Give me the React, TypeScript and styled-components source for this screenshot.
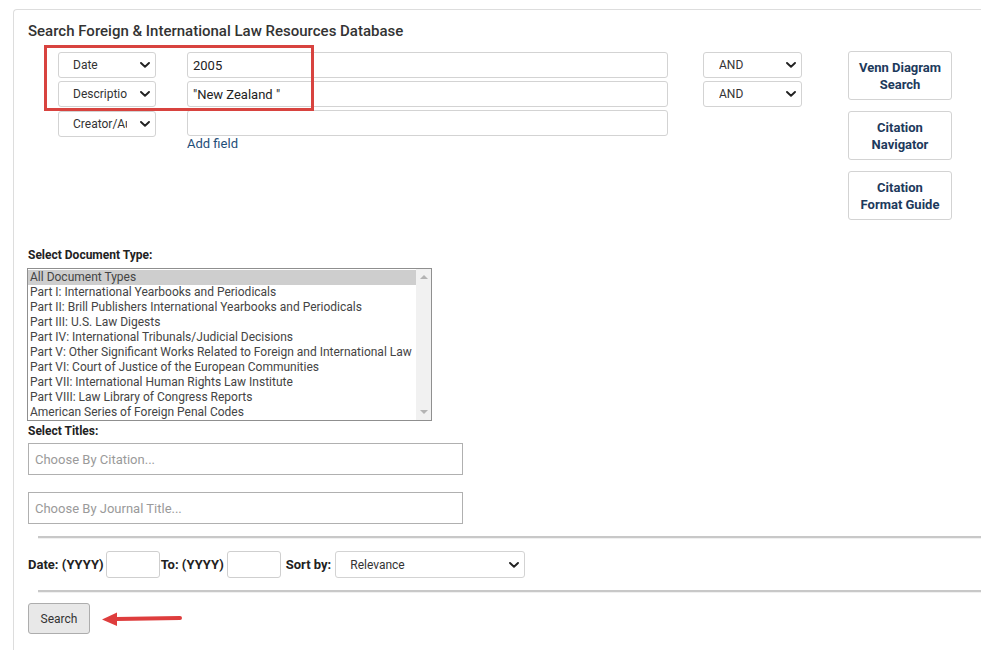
import React from "react";
import styled, { createGlobalStyle } from "styled-components";

const GlobalStyle = createGlobalStyle`
  html, body {
    margin: 0;
    padding: 0;
    background: #fff;
    overflow: hidden;
  }
  body {
    font-family: Roboto, "Liberation Sans", Arial, sans-serif;
    color: #333;
  }
`;

const fields = [
  { name: "Date", value: "2005", bool: "AND" },
  { name: "Description", value: "\"New Zealand \"", bool: "AND" },
  { name: "Creator/Author", value: "", bool: null },
];

const docTypes = [
  "All Document Types",
  "Part I: International Yearbooks and Periodicals",
  "Part II: Brill Publishers International Yearbooks and Periodicals",
  "Part III: U.S. Law Digests",
  "Part IV: International Tribunals/Judicial Decisions",
  "Part V: Other Significant Works Related to Foreign and International Law",
  "Part VI: Court of Justice of the European Communities",
  "Part VII: International Human Rights Law Institute",
  "Part VIII: Law Library of Congress Reports",
  "American Series of Foreign Penal Codes",
];

const Chevron = () => (
  <svg width="10" height="6" viewBox="0 0 10 6">
    <path d="M1 1 L5 4.8 L9 1" fill="none" stroke="#222" strokeWidth="1.9" strokeLinecap="round" strokeLinejoin="round" />
  </svg>
);

export default function App() {
  return (
    <>
      <GlobalStyle />
      <Panel>
        <Title>Search Foreign &amp; International Law Resources Database</Title>
        <QueryArea>
          <FieldGrid>
            {fields.map((f) => (
              <React.Fragment key={f.name}>
                <FieldSelect>
                  <SelectText $width={54}>{f.name}</SelectText>
                  <Chevron />
                </FieldSelect>
                <TermInput>{f.value}</TermInput>
                {f.bool ? (
                  <BoolSelect>
                    <SelectText $width={50}>{f.bool}</SelectText>
                    <Chevron />
                  </BoolSelect>
                ) : (
                  <span />
                )}
              </React.Fragment>
            ))}
            <span />
            <AddField>Add field</AddField>
            <Highlight />
          </FieldGrid>
          <ToolColumn>
            <ToolButton>Venn Diagram<br />Search</ToolButton>
            <ToolButton>Citation<br />Navigator</ToolButton>
            <ToolButton>Citation<br />Format Guide</ToolButton>
          </ToolColumn>
        </QueryArea>

        <Label>Select Document Type:</Label>
        <ListBox>
          <Options>
            {docTypes.map((d, i) => (
              <Option key={d} $selected={i === 0}>{d}</Option>
            ))}
          </Options>
          <ScrollTrack>
            <ScrollArrow $up />
            <ScrollArrow />
          </ScrollTrack>
        </ListBox>

        <TitlesLabel>Select Titles:</TitlesLabel>
        <TitleInputs>
          <TitleInput>Choose By Citation...</TitleInput>
          <TitleInput>Choose By Journal Title...</TitleInput>
        </TitleInputs>

        <Rule />
        <FilterRow>
          <FilterLabel $gap={2}>Date: (YYYY)</FilterLabel>
          <YearInput $gap={1} />
          <FilterLabel $gap={3}>To: (YYYY)</FilterLabel>
          <YearInput $gap={5} />
          <FilterLabel $gap={4}>Sort by:</FilterLabel>
          <SortSelect>
            <span>Relevance</span>
            <Chevron />
          </SortSelect>
        </FilterRow>
        <Rule />

        <SubmitRow>
          <SearchButton>Search</SearchButton>
          <svg width="84" height="16" viewBox="0 0 84 16">
            <path d="M16 8 L80 7" stroke="#de3d3d" strokeWidth="4" strokeLinecap="round" />
            <path d="M2 8.5 L17 1.5 L17 15 Z" fill="#de3d3d" />
          </svg>
        </SubmitRow>
      </Panel>
    </>
  );
}

const Panel = styled.div`
  margin: 9px 0 0 13px;
  height: 660px;
  border: 1px solid #ddd;
  border-right: none;
  border-bottom: none;
  border-top-left-radius: 4px;
  padding: 11px 0 0 14px;
`;

const Title = styled.h2`
  margin: 0 0 10px;
  font-size: 15px;
  line-height: 20px;
  font-weight: 500;
  color: #333;
`;

const QueryArea = styled.div`
  display: flex;
  align-items: flex-start;
  margin-left: 30px;
`;

const FieldGrid = styled.div`
  position: relative;
  display: grid;
  grid-template-columns: 98px 481px 103px;
  grid-template-rows: 26px 26px 26px auto;
  column-gap: 31px;
  row-gap: 3px;
  margin-top: 1px;
  & > :nth-child(7) {
    margin-top: 1px;
  }
`;

const Control = styled.div`
  box-sizing: border-box;
  display: flex;
  align-items: center;
  height: 26px;
  border: 1px solid #d3d3d3;
  border-radius: 3px;
  background: #fff;
  font-size: 12px;
  color: #333;
`;

const FieldSelect = styled(Control)`
  justify-content: space-between;
  padding: 0 5px 0 14px;
`;

const BoolSelect = styled(Control)`
  width: 99px;
  justify-self: end;
  justify-content: space-between;
  padding: 0 5px 0 15px;
`;

const SelectText = styled.span<{ $width: number }>`
  width: ${(p) => p.$width}px;
  overflow: hidden;
  white-space: nowrap;
`;

const TermInput = styled(Control)`
  padding: 0 5px;
  font-size: 13px;
  color: #222;
`;

const AddField = styled.a`
  grid-column: 2;
  font-size: 13px;
  line-height: 16px;
  margin-top: -3px;
  color: #1f4e79;
  text-decoration: none;
  cursor: pointer;
`;

const Highlight = styled.div`
  position: absolute;
  left: -14px;
  top: -7px;
  width: 270px;
  height: 66px;
  box-sizing: border-box;
  border: 3px solid #d8433f;
  pointer-events: none;
`;

const ToolColumn = styled.div`
  display: flex;
  flex-direction: column;
  gap: 11px;
  margin-left: 46px;
`;

const ToolButton = styled.button`
  box-sizing: border-box;
  width: 104px;
  height: 49px;
  border: 1px solid #d3d3d3;
  border-radius: 3px;
  background: #fff;
  font-family: Roboto, "Liberation Sans", Arial, sans-serif;
  font-size: 13px;
  font-weight: 700;
  line-height: 17px;
  color: #1d3a5c;
  padding: 0;
`;

const Label = styled.div`
  margin: 27px 0 4px;
  font-size: 12px;
  line-height: 17px;
  font-weight: 700;
  color: #222;
`;

const ListBox = styled.div`
  box-sizing: border-box;
  display: flex;
  width: 405px;
  height: 153px;
  margin-left: -1px;
  border: 1px solid #8f8f8f;
  background: #fff;
`;

const Options = styled.div`
  flex: 1;
  padding-top: 1px;
`;

const Option = styled.div<{ $selected?: boolean }>`
  height: 15px;
  line-height: 15px;
  padding-left: 2px;
  font-size: 12px;
  white-space: nowrap;
  color: #444;
  background: ${(p) => (p.$selected ? "#cecece" : "transparent")};
`;

const ScrollTrack = styled.div`
  width: 15px;
  display: flex;
  flex-direction: column;
  justify-content: space-between;
  align-items: center;
  padding: 6px 0;
  background: #f1f1f1;
`;

const ScrollArrow = styled.div<{ $up?: boolean }>`
  width: 0;
  height: 0;
  border-left: 4px solid transparent;
  border-right: 4px solid transparent;
  ${(p) => (p.$up ? "border-bottom: 4px solid #b4b4b4;" : "border-top: 4px solid #b4b4b4;")}
`;

const TitlesLabel = styled(Label)`
  margin: 2px 0 3px;
`;

const TitleInputs = styled.div`
  display: flex;
  flex-direction: column;
  gap: 17px;
  margin-bottom: 12px;
`;

const TitleInput = styled.div`
  box-sizing: border-box;
  width: 435px;
  height: 32px;
  padding: 0 6px;
  display: flex;
  align-items: center;
  border: 1px solid #b0b0b0;
  font-size: 13px;
  color: #9a9a9a;
`;

const Rule = styled.hr`
  margin: 0 0 0 10px;
  height: 0;
  border: none;
  border-top: 2px solid #c8c8c8;
  border-bottom: 1px solid #f0f0f0;
`;

const FilterRow = styled.div`
  display: flex;
  align-items: center;
  height: 51px;
`;

const FilterLabel = styled.span<{ $gap: number }>`
  font-size: 13px;
  font-weight: 700;
  color: #222;
  margin-right: ${(p) => p.$gap}px;
`;

const YearInput = styled.div<{ $gap: number }>`
  box-sizing: border-box;
  width: 54px;
  height: 27px;
  border: 1px solid #cfcfcf;
  border-radius: 3px;
  margin-right: ${(p) => p.$gap}px;
`;

const SortSelect = styled(Control)`
  width: 190px;
  height: 27px;
  justify-content: space-between;
  padding: 0 5px 0 14px;
`;

const SubmitRow = styled.div`
  display: flex;
  align-items: center;
  gap: 10px;
  margin-top: 10px;
`;

const SearchButton = styled.button`
  box-sizing: border-box;
  width: 62px;
  height: 31px;
  border: 1px solid #adadad;
  border-radius: 3px;
  background: #e8e8e8;
  font-family: Roboto, "Liberation Sans", Arial, sans-serif;
  font-size: 12px;
  color: #333;
`;
